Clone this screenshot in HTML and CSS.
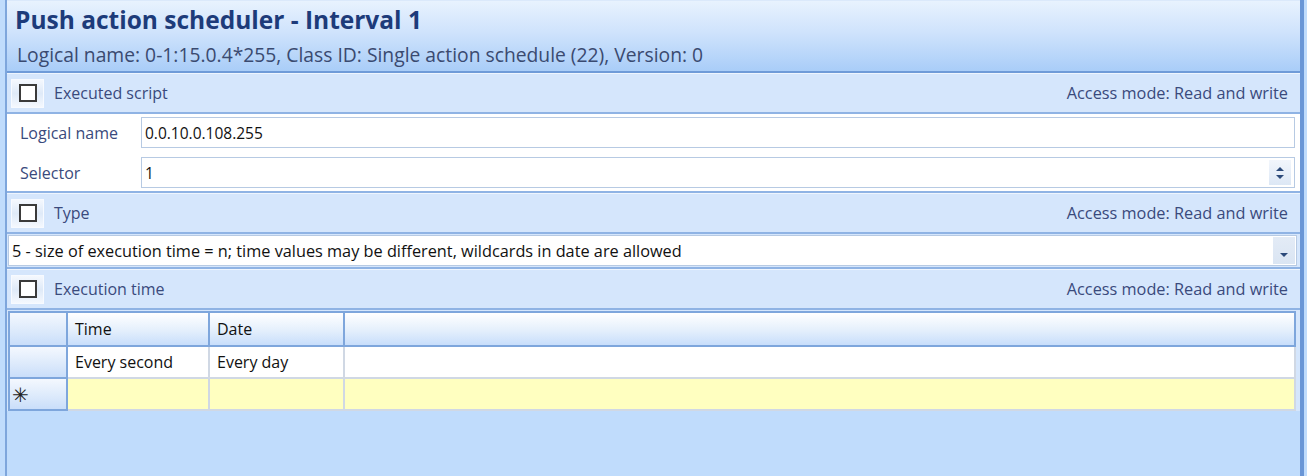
FILE: index.html
```html
<!DOCTYPE html>
<html lang="en">
<head>
    <meta charset="UTF-8">
    <title>Push action scheduler</title>
    <link rel="stylesheet" href="styles.css">
</head>
<body>
<div class="panel">
    <!-- Object header -->
    <div class="obj-header">
        <h1 class="obj-title">Push action scheduler - Interval 1</h1>
        <div class="obj-sub">Logical name: 0-1:15.0.4*255, Class ID: Single action schedule (22), Version: 0</div>
    </div>

    <!-- Executed script -->
    <div class="attr-bar">
        <span class="check-btn"><span class="check-box"></span></span>
        <span class="attr-name">Executed script</span>
        <span class="attr-access">Access mode: Read and write</span>
    </div>
    <div class="attr-body">
        <div class="field-row">
            <label class="field-label">Logical name</label>
            <div class="field-input">0.0.10.0.108.255</div>
        </div>
        <div class="field-row">
            <label class="field-label">Selector</label>
            <div class="field-input">
                <span class="field-value">1</span>
                <span class="spin">
                    <svg width="12" height="8" viewBox="0 0 12 8"><path d="M2 6 L6 2 L10 6 Z" fill="#2c4a7a"/></svg>
                    <svg width="12" height="8" viewBox="0 0 12 8"><path d="M2 2 L6 6 L10 2 Z" fill="#2c4a7a"/></svg>
                </span>
            </div>
        </div>
    </div>

    <!-- Type -->
    <div class="attr-bar">
        <span class="check-btn"><span class="check-box"></span></span>
        <span class="attr-name">Type</span>
        <span class="attr-access">Access mode: Read and write</span>
    </div>
    <div class="combo-wrap">
        <div class="combo">
            <span class="combo-value">5 - size of execution time = n; time values may be different, wildcards in date are allowed</span>
            <span class="combo-btn">
                <svg width="12" height="8" viewBox="0 0 12 8"><path d="M2 2 L6 6 L10 2 Z" fill="#2c4a7a"/></svg>
            </span>
        </div>
    </div>

    <!-- Execution time -->
    <div class="attr-bar">
        <span class="check-btn"><span class="check-box"></span></span>
        <span class="attr-name">Execution time</span>
        <span class="attr-access">Access mode: Read and write</span>
    </div>
    <div class="grid-wrap">
        <table class="grid">
            <tr class="grid-head">
                <td class="row-head"></td>
                <td class="col-time">Time</td>
                <td class="col-date">Date</td>
                <td></td>
            </tr>
            <tr class="grid-row">
                <td class="row-head"></td>
                <td>Every second</td>
                <td>Every day</td>
                <td></td>
            </tr>
            <tr class="grid-new">
                <td class="row-head star">&#10035;</td>
                <td></td>
                <td></td>
                <td></td>
            </tr>
        </table>
    </div>
</div>
</body>
</html>
```

FILE: styles.css
```css
body {
    margin: 0;
    height: 476px;
    overflow: hidden;
    background-color: #c0dcfc;
    font-family: "Open Sans", "Noto Sans", sans-serif;
    font-size: 16px;
}

.panel {
    margin-left: 5px;
    width: 1293px;
    height: 476px;
    border-left: 2px solid #7ea6dc;
    border-right: 4px solid #6a96d6;
    background-color: #c0dcfc;
}

/* Header with object name */
.obj-header {
    height: 73px;
    padding-left: 8px;
    background: linear-gradient(to bottom, #e8f2fe 0%, #cfe3fc 45%, #a9cdf8 100%);
    border-top: 1px solid #dbe9fb;
    border-bottom: 2px solid #6f9bd8;
    box-sizing: border-box;
}

.obj-title {
    margin: 0;
    padding-top: 2px;
    font-size: 24.5px;
    font-weight: bold;
    color: #1d3b7a;
    line-height: 34px;
}

.obj-sub {
    padding-left: 2px;
    margin-top: 6px;
    font-size: 19.3px;
    color: #3a4a70;
    line-height: 24px;
}

/* Attribute bar */
.attr-bar {
    display: flex;
    align-items: center;
    height: 38px;
    padding: 0 12px 0 4px;
    background-color: #d5e6fc;
    border-top: 1px solid #eef5fe;
    border-bottom: 2px solid #8fb3e4;
    color: #3a4a7c;
}

.check-btn {
    display: flex;
    align-items: center;
    justify-content: center;
    width: 33px;
    height: 29px;
    background: linear-gradient(to bottom, #f4f8fe 0%, #dfeaf8 50%, #f4f8fe 100%);
    border: 1px solid #f7faff;
    box-sizing: border-box;
}

.check-box {
    width: 18px;
    height: 18px;
    border: 2px solid #3a3a3a;
    background-color: #fff;
    box-sizing: border-box;
}

.attr-name {
    margin-left: 10px;
    flex: 1;
}

.attr-access {
    font-size: 16.3px;
}

/* Attribute body */
.attr-body {
    display: flex;
    flex-direction: column;
    gap: 9px;
    background-color: #fff;
    padding: 3px 5px 3px 12px;
    border-bottom: 2px solid #8fb3e4;
}

.field-row {
    display: flex;
    align-items: center;
}

.field-label {
    width: 121px;
    color: #3a4a7c;
    padding-left: 1px;
}

.field-input {
    flex: 1;
    display: flex;
    align-items: center;
    height: 31px;
    padding-left: 3px;
    border: 1px solid #b7cae3;
    box-sizing: border-box;
    color: #111;
    font-size: 15.5px;
}

.field-value {
    flex: 1;
}

.spin {
    display: flex;
    flex-direction: column;
    align-items: center;
    justify-content: center;
    width: 22px;
    height: 25px;
    margin-right: 3px;
    background: linear-gradient(to bottom, #f2f6fc, #dce7f5);
}

/* Type combo */
.combo-wrap {
    padding: 1px 3px 1px 1px;
    background-color: #d5e6fc;
    border-bottom: 2px solid #8fb3e4;
}

.combo {
    display: flex;
    align-items: center;
    height: 31px;
    padding-left: 3px;
    background-color: #fff;
    border: 1px solid #b7cae3;
    box-sizing: border-box;
    color: #111;
}

.combo-value {
    flex: 1;
    font-size: 16.3px;
}

.combo-btn {
    display: flex;
    align-items: flex-end;
    justify-content: center;
    width: 22px;
    height: 27px;
    padding-bottom: 5px;
    margin-right: 1px;
    box-sizing: border-box;
    background: linear-gradient(to bottom, #e3ebf6, #dae5f3);
}

/* Grid */
.grid-wrap {
    padding: 1px 4px 0 1px;
    background-color: #d5e6fc;
}

.grid {
    width: 100%;
    border-collapse: collapse;
    border: 2px solid #7ea6dc;
    background-color: #fff;
    color: #111;
}

.grid td {
    height: 30px;
    padding: 0 0 0 7px;
    border-right: 2px solid #d0d8e4;
    border-bottom: 2px solid #d0d8e4;
}

.grid-head td {
    height: 32px;
    background: linear-gradient(to bottom, #ffffff 0%, #e4effc 55%, #c8defb 100%);
    border-right: 2px solid #7ea6dc;
    border-bottom: 2px solid #7ea6dc;
}

.grid td.row-head {
    width: 54px;
    padding: 0 0 0 2px;
    background: linear-gradient(to bottom, #f4f8fe 0%, #dbe9fb 60%, #c9defa 100%);
    border-right: 2px solid #7ea6dc;
    border-bottom: 2px solid #7ea6dc;
}

.grid td.col-time {
    width: 133px;
}

.grid td.col-date {
    width: 126px;
}

.grid-new td {
    background-color: #ffffc0;
}

.grid td.star {
    font-size: 20px;
    color: #222;
}
```
